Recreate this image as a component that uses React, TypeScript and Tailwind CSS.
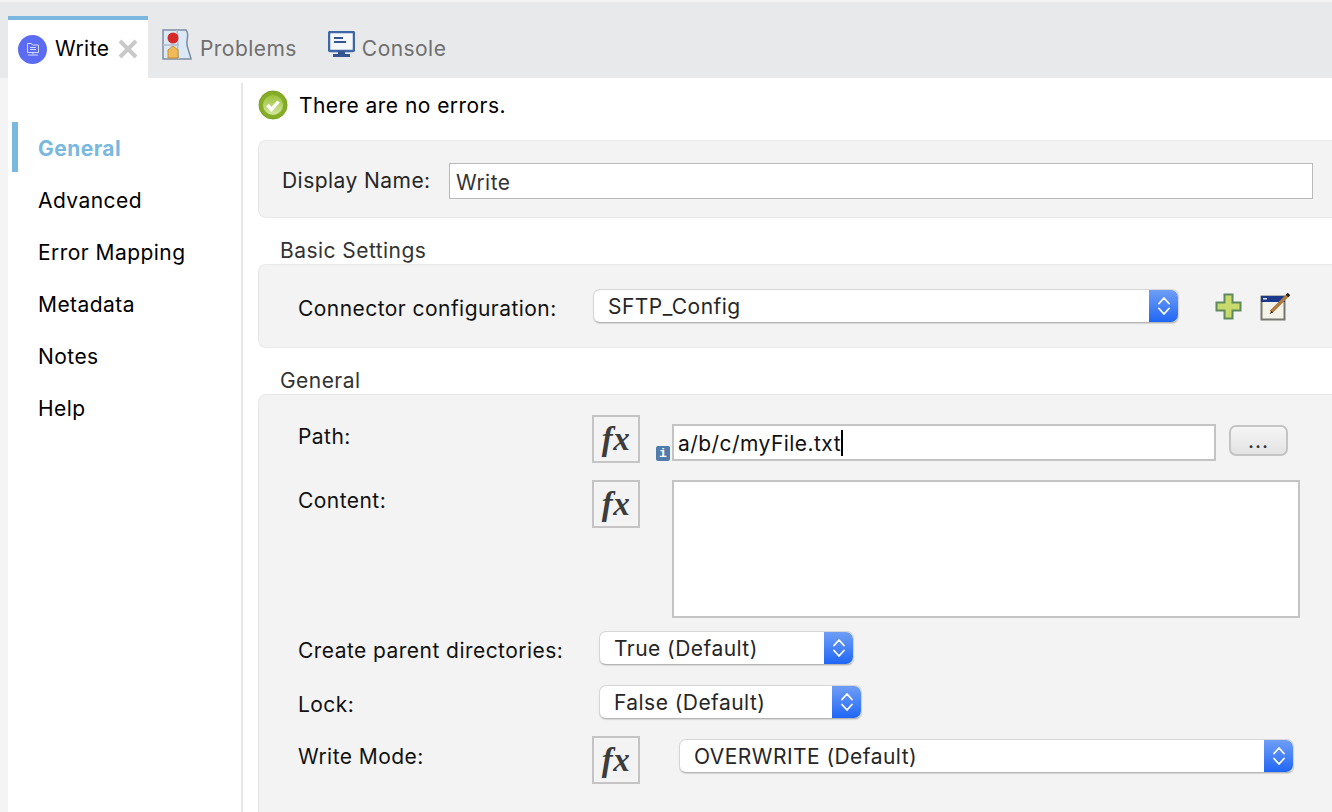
// Write connector properties panel: tabs, side nav and the general form.
import type { ReactNode } from "react";

const navItems = ["General", "Advanced", "Error Mapping", "Metadata", "Notes", "Help"];

function Stepper() {
  return (
    <span className="flex h-full w-[29px] shrink-0 items-center justify-center rounded-r-[7px] bg-gradient-to-b from-[#6e9df5] to-[#1f66f5]">
      <svg width="14" height="22" viewBox="0 0 14 22" fill="none" stroke="white" strokeWidth="1.8" strokeLinecap="round" strokeLinejoin="round">
        <path d="M2 8.5 7 3l5 5.5" />
        <path d="M2 13.5 7 19l5-5.5" />
      </svg>
    </span>
  );
}

function Select({ value, className }: { value: string; className: string }) {
  return (
    <div className={`flex h-[34px] items-center rounded-[7px] border border-[#d6d6d6] border-b-[#b5b5b5] bg-white shadow-[0_1px_1px_rgba(0,0,0,0.12)] ${className}`}>
      <span className="flex-1 pt-[1px] pl-[14px] text-[#262626]">{value}</span>
      <Stepper />
    </div>
  );
}

function FxButton() {
  return (
    <div className="flex h-[48px] w-[48px] shrink-0 items-center justify-center border-2 border-[#c4c4c4] bg-[#f3f3f3] font-['Liberation_Serif',serif] text-[33px] leading-none font-bold tracking-[0.5px] text-[#3c3c3c] italic">
      <span>fx</span>
    </div>
  );
}

function Panel({ className, children }: { className: string; children: ReactNode }) {
  return <div className={`rounded-l-[8px] border border-r-0 border-[#e8e8e8] bg-[#f3f3f3] ${className}`}>{children}</div>;
}

function PlusIcon() {
  return (
    <svg width="27" height="27" viewBox="0 0 27 27">
      <path d="M9.5 1.5h8v8h8v8h-8v8h-8v-8h-8v-8h8z" fill="#c9da6c" stroke="#5f8a5f" strokeWidth="2" />
    </svg>
  );
}

function EditIcon() {
  return (
    <svg width="32" height="30" viewBox="0 0 32 30">
      <rect x="1.5" y="5.5" width="23" height="23" fill="#f4f3ea" stroke="#77776f" strokeWidth="2" />
      <rect x="1" y="5" width="24" height="6" fill="#1c3a8c" />
      <rect x="3" y="7" width="4" height="1.5" fill="#dfe8ff" />
      <path d="M11 21 28 4" stroke="#b07c3c" strokeWidth="3.5" />
      <path d="M27 5l2-2" stroke="#222" strokeWidth="3.5" />
      <path d="M9.5 23l2-3 1.5 1.5z" fill="#222" />
    </svg>
  );
}

export default function App() {
  return (
    <div className="flex h-[812px] w-[1332px] flex-col overflow-hidden bg-[#f4f4f5] pt-[2px] font-['Inter','Liberation_Sans',sans-serif] text-[21px] tracking-[0.45px] text-black">
      <div className="flex h-[76px] shrink-0 items-end bg-[#e8e9eb] pl-[8px]">
        <div className="flex h-[62px] w-[140px] items-center border-t-4 border-[#7ab8e0] bg-white pl-[10px]">
          <span className="flex h-[29px] w-[29px] items-center justify-center rounded-full bg-[#5c6cf2]">
            <svg width="16" height="16" viewBox="0 0 16 16" fill="none" stroke="#d5dafc" strokeWidth="1">
              <path d="M2.5 2.5h4l1 1.5h6v7.5h-11z" />
              <path d="M8 11.5v2M3 14h10M5 6.5h6M5 8.5h6" />
            </svg>
          </span>
          <span className="ml-[8px]">Write</span>
          <svg className="ml-[9px]" width="20" height="20" viewBox="0 0 20 20" stroke="#c9c9c9" strokeWidth="4">
            <path d="M2 2l16 16M18 2 2 18" />
          </svg>
        </div>
        <div className="flex h-[62px] items-center pt-[4px] text-[#6f6f6f]">
          <svg className="mt-[-9px] ml-[14px]" width="30" height="31" viewBox="0 0 30 31">
            <path d="M1 1h23c4 5 0 9 1 15 1 5 3 9 4 14H1z" fill="#dbe9f6" stroke="#7f8ca3" strokeWidth="1.5" />
            <path d="M15 1c2 10-1 20 2 29M1 16h16" stroke="#aebccd" strokeWidth="1.5" fill="none" />
            <circle cx="11" cy="9" r="5.5" fill="#d62a2a" />
            <path d="M6 29v-8l5-4 5 4v8z" fill="#f0b95a" stroke="#c98f2f" />
          </svg>
          <span className="ml-[8px]">Problems</span>
          <svg className="mt-[-9px] ml-[31px]" width="27" height="27" viewBox="0 0 27 27">
            <rect x="1" y="1" width="25" height="19" rx="1.5" fill="#f5f7fb" stroke="#3f66a6" strokeWidth="2.5" />
            <path d="M6 7h9M6 11h12" stroke="#34558f" strokeWidth="2" />
            <path d="M10 20h7v3h5v3H5v-3h5z" fill="#34558f" />
          </svg>
          <span className="ml-[7px]">Console</span>
        </div>
      </div>

      <div className="flex min-h-0 flex-1 pl-[8px]">
        <div className="flex flex-1 bg-white">
          <nav className="mt-[5px] w-[235px] shrink-0 border-r-2 border-[#e6e6e6] pt-[39px] pl-[4px]">
            {navItems.map((item) =>
              item === "General" ? (
                <div key={item} className="mb-[2px] flex h-[50px] items-center border-l-[6px] border-[#7ab8e0] pt-[3px] pl-[20px] font-bold text-[#7ab8e0]">
                  {item}
                </div>
              ) : (
                <div key={item} className="flex h-[52px] items-center pt-[2px] pl-[26px]">
                  {item}
                </div>
              ),
            )}
          </nav>

          <main className="min-w-0 flex-1 pl-[15px]">
            <div className="flex h-[62px] items-start pt-[12px]">
              <svg width="30" height="30" viewBox="0 0 30 30">
                <defs>
                  <linearGradient id="okFill" x1="0" y1="0" x2="0" y2="1">
                    <stop offset="0" stopColor="#9cc23a" />
                    <stop offset="1" stopColor="#d4e6a0" />
                  </linearGradient>
                </defs>
                <circle cx="15" cy="15" r="14" fill="#86ad26" stroke="#74a020" />
                <circle cx="15" cy="15" r="10" fill="url(#okFill)" />
                <path d="m9.5 15 4 4.5 7-8" fill="none" stroke="white" strokeWidth="3.4" />
              </svg>
              <span className="ml-[11px] pt-[1px] leading-[30px]">There are no errors.</span>
            </div>

            <Panel className="flex h-[78px] items-start pt-[22px] pl-[23px]">
              <span className="w-[167px] leading-[36px] text-[#262626]">Display Name:</span>
              <div className="flex h-[36px] w-[864px] items-center border border-[#b9b9b9] bg-white pt-[3px] pl-[6px] text-[#333]">Write</div>
            </Panel>

            <div className="h-[46px] pt-[21px] pl-[22px] leading-[24px] text-[#333]">Basic Settings</div>
            <Panel className="flex h-[84px] items-center pl-[39px]">
              <span className="w-[295px] pt-[6px] text-[#111]">Connector configuration:</span>
              <Select value="SFTP_Config" className="w-[586px]" />
              <span className="ml-[36px]"><PlusIcon /></span>
              <span className="ml-[18px]"><EditIcon /></span>
            </Panel>

            <div className="h-[46px] pt-[21px] pl-[22px] leading-[24px] text-[#333]">General</div>
            <Panel className="h-[430px] pt-[20px] pl-[39px]">
              <div className="flex h-[50px]">
                <span className="mt-[6px] w-[294px] text-[#111]">Path:</span>
                <FxButton />
                <span className="mt-[31px] ml-[16px] flex h-[15px] w-[14px] items-center justify-center rounded-[2px] bg-[#4f7cab] font-['Liberation_Mono',monospace] text-[13px] leading-none font-bold tracking-normal text-white">i</span>
                <div className="mt-[9px] ml-[2px] flex h-[37px] w-[544px] items-center border-2 border-[#c4c4c4] bg-white pl-[4px] text-[#111]">
                  <span className="pt-[3px]">a/b/c/myFile.txt</span>
                  <span className="h-[26px] w-[2px] bg-black" />
                </div>
                <div className="mt-[10px] ml-[13px] flex h-[31px] w-[59px] items-center justify-center rounded-[7px] border-2 border-[#c4c4c4] bg-gradient-to-b from-[#f5f5f5] to-[#e3e3e3] tracking-[1px] text-[#333]">...</div>
              </div>
              <div className="mt-[15px] flex h-[138px]">
                <span className="mt-[5px] w-[294px] text-[#111]">Content:</span>
                <FxButton />
                <div className="ml-[32px] h-[138px] w-[628px] border-2 border-[#c4c4c4] bg-white" />
              </div>
              <div className="mt-[13px] flex h-[34px] items-center">
                <span className="w-[301px] pt-[6px] text-[#111]">Create parent directories:</span>
                <Select value="True (Default)" className="w-[255px]" />
              </div>
              <div className="mt-[20px] flex h-[34px] items-center">
                <span className="w-[301px] pt-[6px] text-[#111]">Lock:</span>
                <Select value="False (Default)" className="w-[263px]" />
              </div>
              <div className="mt-[17px] flex h-[48px] items-start">
                <span className="w-[294px] pt-[5px] text-[#111]">Write Mode:</span>
                <FxButton />
                <Select value="OVERWRITE (Default)" className="mt-[3px] ml-[39px] w-[615px]" />
              </div>
            </Panel>
          </main>
        </div>
      </div>
    </div>
  );
}
